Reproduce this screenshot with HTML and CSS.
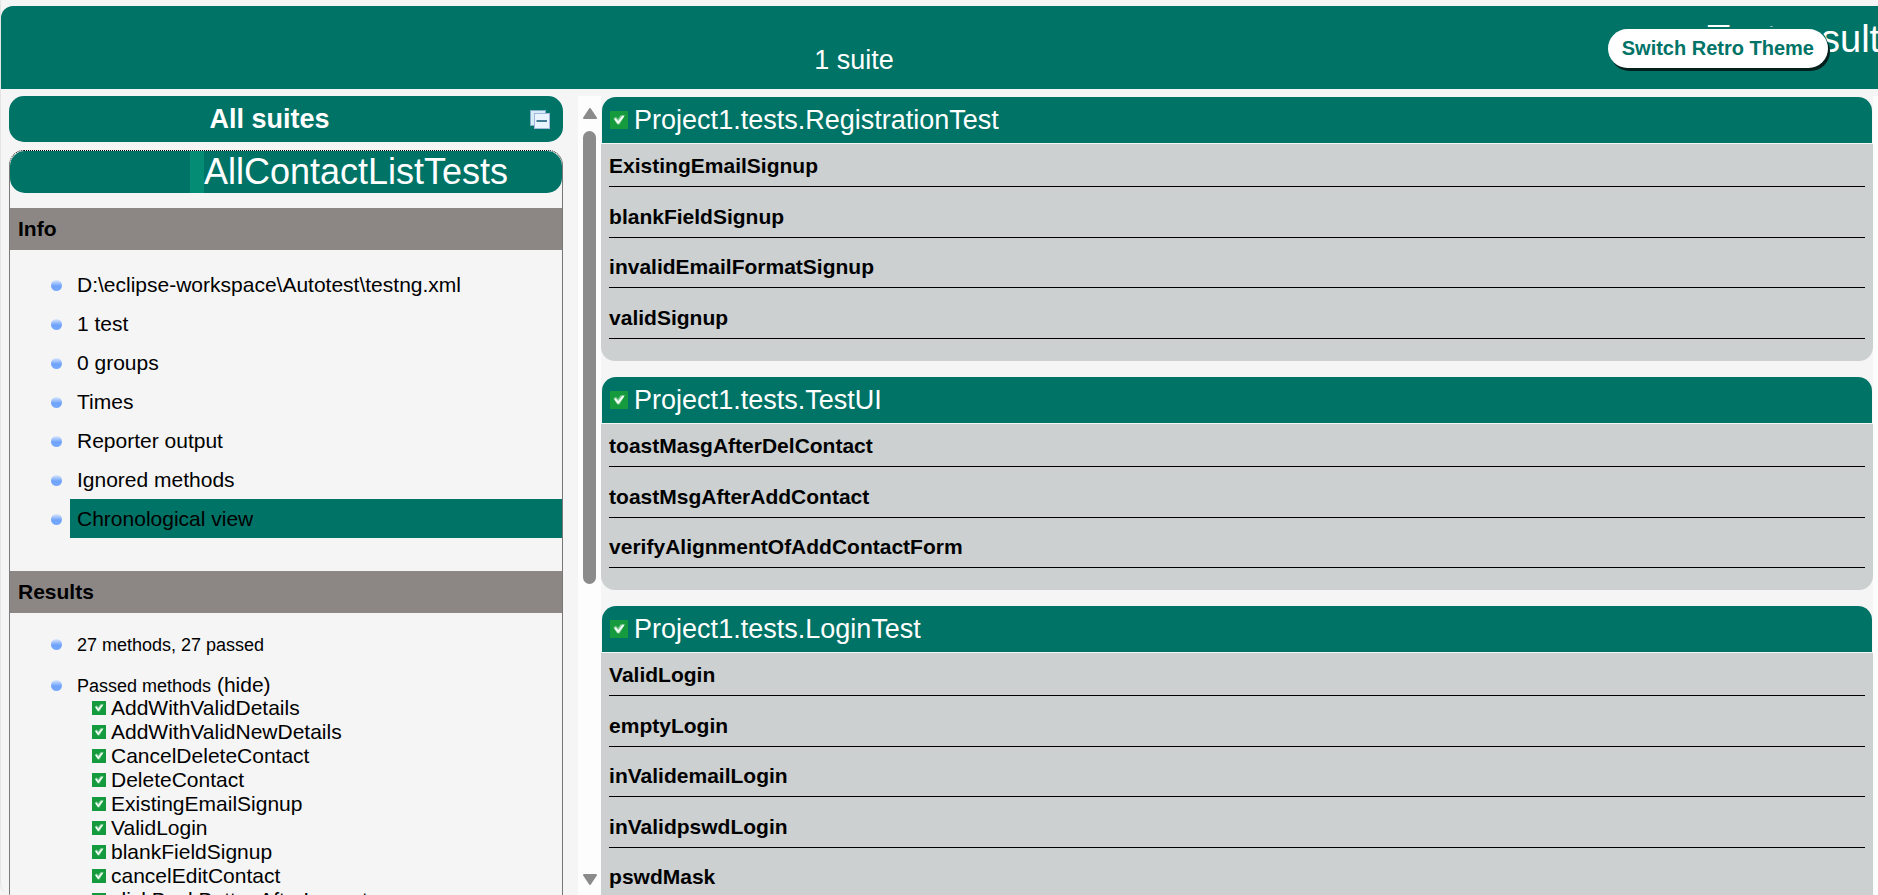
FILE: index.html
```html
<!DOCTYPE html>
<html lang="en">
<head>
<meta charset="utf-8">
<title>TestNG reports</title>
<link rel="stylesheet" href="styles.css">
</head>
<body>
<svg class="sprites" aria-hidden="true">
  <symbol id="passed" viewBox="0 0 18 18">
    <rect width="18" height="18" fill="#159b3d"/>
    <path d="M3.4 7.2 L6 5.8 L8 8 L10.4 4.6 L15 4 L9.6 13.4 L7 13.2 Z" fill="#7fc894"/>
    <path d="M5 7.8 L8.2 11.6 L13.4 5" fill="none" stroke="#f4fff6" stroke-width="2"/>
  </symbol>
</svg>
<header class="banner">
  <span class="suite-count">1 suite</span>
  <h1 class="banner-title">Test results</h1>
  <button class="theme-button" type="button">Switch Retro Theme</button>
</header>
<div class="layout">
  <nav class="sidebar">
    <div class="all-suites">
      <span>All suites</span>
      <button class="collapse" type="button" aria-label="Collapse all">
        <svg viewBox="0 0 20 20" width="20" height="20">
          <rect x="0.5" y="1.5" width="15" height="15" fill="#d5ebf6" stroke="#86aeca"/>
          <rect x="4.5" y="4.5" width="15" height="15" fill="#e9f4ff" stroke="#a3b6dc"/>
          <path d="M6.5 12H17" stroke="#1b5d7c" stroke-width="1.6"/>
        </svg>
      </button>
    </div>
    <section class="suite">
      <div class="suite-name"><a href="#suite">AllContactListTests</a></div>
      <h2 class="section-title">Info</h2>
      <ul class="entries">
        <li><a href="#xml">D:\eclipse-workspace\Autotest\testng.xml</a></li>
        <li><a href="#tests">1 test</a></li>
        <li><a href="#groups">0 groups</a></li>
        <li><a href="#times">Times</a></li>
        <li><a href="#reporter">Reporter output</a></li>
        <li><a href="#ignored">Ignored methods</a></li>
        <li><a class="current" href="#chronological">Chronological view</a></li>
      </ul>
      <h2 class="section-title results">Results</h2>
      <ul class="entries">
        <li><span class="stats">27 methods, 27 passed</span></li>
        <li><div class="passed-title"><span class="stats">Passed methods</span> <a class="hide" href="#hide">(hide)</a></div>
          <ul class="methods">
            <li><svg><use href="#passed"/></svg><a href="#m1">AddWithValidDetails</a></li>
            <li><svg><use href="#passed"/></svg><a href="#m2">AddWithValidNewDetails</a></li>
            <li><svg><use href="#passed"/></svg><a href="#m3">CancelDeleteContact</a></li>
            <li><svg><use href="#passed"/></svg><a href="#m4">DeleteContact</a></li>
            <li><svg><use href="#passed"/></svg><a href="#m5">ExistingEmailSignup</a></li>
            <li><svg><use href="#passed"/></svg><a href="#m6">ValidLogin</a></li>
            <li><svg><use href="#passed"/></svg><a href="#m7">blankFieldSignup</a></li>
            <li><svg><use href="#passed"/></svg><a href="#m8">cancelEditContact</a></li>
            <li><svg><use href="#passed"/></svg><a href="#m9">clickBackButtonAfterLogout</a></li>
          </ul>
        </li>
      </ul>
    </section>
  </nav>
  <div class="scroller" aria-hidden="true">
    <svg class="arrow" viewBox="0 0 14 11"><path d="M7 1 L13 10 H1 Z" fill="#8b8b8b" stroke="#8b8b8b" stroke-width="2" stroke-linejoin="round"/></svg>
    <div class="rail"><div class="thumb"></div></div>
    <svg class="arrow" viewBox="0 0 14 11"><path d="M7 10 L13 1 H1 Z" fill="#8b8b8b" stroke="#8b8b8b" stroke-width="2" stroke-linejoin="round"/></svg>
  </div>
  <main class="content">
    <section class="panel">
      <h2 class="panel-title"><svg><use href="#passed"/></svg>Project1.tests.RegistrationTest</h2>
      <div class="panel-body">
        <div class="method">ExistingEmailSignup</div>
        <div class="method">blankFieldSignup</div>
        <div class="method">invalidEmailFormatSignup</div>
        <div class="method">validSignup</div>
      </div>
    </section>
    <section class="panel">
      <h2 class="panel-title"><svg><use href="#passed"/></svg>Project1.tests.TestUI</h2>
      <div class="panel-body">
        <div class="method">toastMasgAfterDelContact</div>
        <div class="method">toastMsgAfterAddContact</div>
        <div class="method">verifyAlignmentOfAddContactForm</div>
      </div>
    </section>
    <section class="panel">
      <h2 class="panel-title"><svg><use href="#passed"/></svg>Project1.tests.LoginTest</h2>
      <div class="panel-body">
        <div class="method">ValidLogin</div>
        <div class="method">emptyLogin</div>
        <div class="method">inValidemailLogin</div>
        <div class="method">inValidpswdLogin</div>
        <div class="method">pswdMask</div>
      </div>
    </section>
  </main>
  <div class="edge" aria-hidden="true"></div>
</div>
</body>
</html>
```
FILE: styles.css
```css
* { box-sizing: border-box; }

body {
  margin: 0;
  height: 100vh;
  padding-top: 6px;
  border-left: 1px solid #e4e4e4;
  border-bottom-left-radius: 12px;
  display: flex;
  flex-direction: column;
  overflow: hidden;
  background: #f5f5f5;
  color: #000;
  font-family: "Liberation Sans", Arial, sans-serif;
  font-size: 21px;
  line-height: 24px;
}

h1, h2, ul { margin: 0; padding: 0; }
ul { list-style: none; }
a { color: inherit; text-decoration: none; }
.sprites { display: none; }

/* Banner */
.banner {
  position: relative;
  flex: none;
  display: flex;
  height: 83px;
  border-top-left-radius: 12px;
  background: #007367;
  color: #fff;
}
.suite-count {
  flex: 1;
  padding-top: 38px;
  font-size: 27px;
  line-height: 32px;
  text-align: center;
}
.banner-title {
  flex: 0 0 171px;
  min-width: 0;
  padding-top: 12px;
  font-size: 38px;
  font-weight: normal;
  line-height: 42px;
  white-space: nowrap;
}
.theme-button {
  position: absolute;
  top: 23px;
  right: 50px;
  height: 39px;
  padding: 0 14px 2px;
  border: 0;
  border-radius: 20px;
  background: #fff;
  box-shadow: 2px 3px 0 #03201d, 0 -2px 0 #007367;
  color: #007367;
  font: bold 20px/24px "Liberation Sans", Arial, sans-serif;
}

.layout {
  flex: 1;
  min-height: 0;
  display: flex;
  padding-top: 7px;
}

/* Sidebar */
.sidebar {
  flex: 0 0 30%;
  display: flex;
  flex-direction: column;
  gap: 8px;
  padding: 0 1px 0 8px;
  overflow: hidden;
}
.all-suites {
  flex: none;
  display: flex;
  align-items: center;
  height: 46px;
  padding-right: 13px;
  border-radius: 15px;
  background: #007367;
  color: #fff;
  font-size: 27px;
  font-weight: bold;
}
.all-suites span { flex: 1; text-align: center; }
.collapse {
  width: 20px;
  height: 20px;
  padding: 0;
  border: 0;
  background: none;
}
.collapse svg { display: block; }
.suite {
  flex: 1 0 auto;
  border: 1px dotted #000;
  border-right: 1px solid #777;
  border-radius: 15px 15px 0 0;
}
.suite-name {
  height: 42px;
  margin-bottom: 15px;
  padding-left: 180px;
  border-radius: 15px;
  background: #007367;
  color: #fff;
  font-size: 36px;
  line-height: 42px;
}
.suite-name a { display: inline-block; border-left: 14px solid #048d74; }
.section-title {
  height: 42px;
  padding-left: 8px;
  background: #8c8785;
  font-size: 21px;
  line-height: 42px;
}
.section-title.results { margin-top: 33px; }
.entries { padding: 15px 0 0 36px; }
.entries > li {
  position: relative;
  padding-left: 24px;
  line-height: 39px;
}
.entries > li::before {
  content: "";
  position: absolute;
  top: 15px;
  left: 5px;
  width: 11px;
  height: 11px;
  border-radius: 50%;
  background: linear-gradient(#dbe8fd, #6ea2fb 55%, #78abfd);
}
.entries > li > a { display: block; padding-left: 7px; }
.entries > li > a.current { background: #007367; }
.stats { font-size: 18px; }
.entries > li > .stats { padding-left: 7px; }
.passed-title { height: 31px; padding-left: 7px; }
.results + .entries { padding-top: 11px; }
.methods { padding-left: 22px; }
.methods li {
  display: flex;
  align-items: center;
  gap: 5px;
  line-height: 24px;
}
.methods svg { width: 14px; height: 14px; }

/* Scroll bar beside the content */
.scroller {
  flex: 0 0 23px;
  display: flex;
  flex-direction: column;
  align-items: center;
  gap: 12px;
  margin-left: 14px;
  padding: 12px 0 10px;
  background: #fdfdfd;
}
.arrow { flex: none; width: 14px; height: 11px; }
.rail { flex: 1; width: 13px; }
.thumb { height: 62%; border-radius: 7px; background: #8b8b8b; }

/* Result panels */
.content {
  flex: 1;
  min-width: 0;
  display: flex;
  flex-direction: column;
  gap: 16px;
  padding-top: 1px;
  overflow: hidden;
}
.panel { flex: none; }
.panel-title {
  display: flex;
  align-items: center;
  gap: 6px;
  height: 46px;
  margin: 0 1px 1px;
  padding-left: 8px;
  border-radius: 14px 14px 0 0;
  background: #007367;
  color: #fff;
  font-size: 27px;
  font-weight: normal;
  line-height: 32px;
}
.panel-title svg { width: 18px; height: 18px; }
.panel-body {
  padding: 10px 8px 22px;
  border-radius: 0 0 14px 14px;
  background: #ccd0d1;
}
.method {
  margin-top: 17px;
  padding-bottom: 8px;
  border-bottom: 1px solid #000;
  font-weight: bold;
}
.method:nth-child(even) { margin-top: 18px; }
.method:first-child { margin-top: 0; }
.edge { flex: 0 0 5px; background: #fdfdfd; }
```
